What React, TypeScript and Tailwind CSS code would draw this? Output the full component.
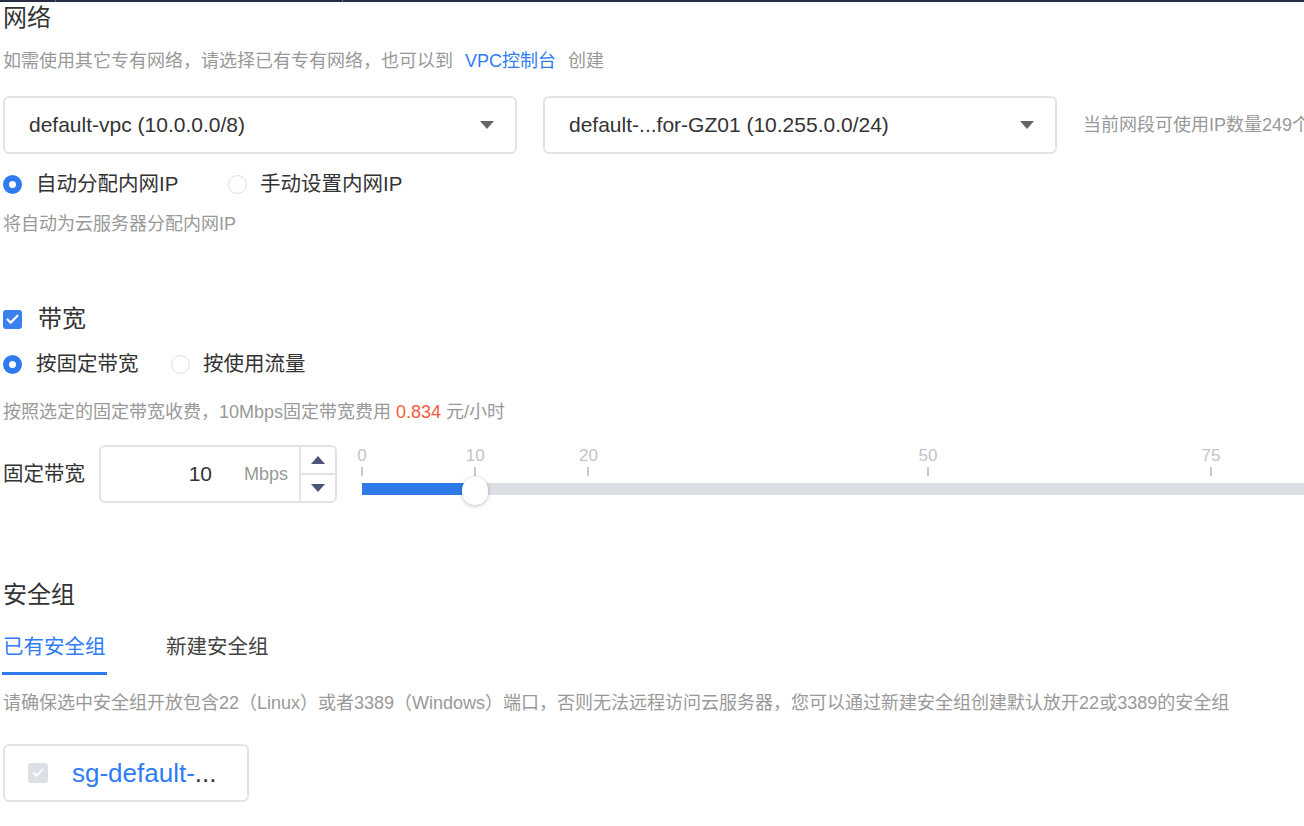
import { Check } from 'lucide-react'

const font = 'font-["Liberation_Sans","Noto_Sans_CJK_SC",sans-serif]'

const ticks = [
  { v: 0, label: '0' },
  { v: 10, label: '10' },
  { v: 20, label: '20' },
  { v: 50, label: '50' },
  { v: 75, label: '75' },
]

const UNIT = 11.32

function Radio({ checked }: { checked?: boolean }) {
  return checked ? (
    <span className="block w-[19px] h-[19px] rounded-full border-[6px] border-[#2f7bed] bg-white shrink-0" />
  ) : (
    <span className="block w-[19px] h-[19px] rounded-full border-[1.5px] border-[#dcdfe6] bg-white shrink-0" />
  )
}

function Caret() {
  return (
    <svg width="14" height="8" viewBox="0 0 14 8" className="shrink-0">
      <path d="M0 0h14L7 8z" fill="#666" />
    </svg>
  )
}

function Select({ text }: { text: string }) {
  return (
    <div className="w-[514px] h-[58px] shrink-0 flex items-center justify-between pl-[24px] pr-[21px] border-2 border-[#e0e3e8] rounded-[6px] text-[21px] text-[#333]">
      <span>{text}</span>
      <Caret />
    </div>
  )
}

function Slider({ value }: { value: number }) {
  const fill = value * UNIT
  return (
    <div className="relative w-[1132px] h-[58px] shrink-0">
      {ticks.map((t) => (
        <div key={t.v}>
          <span
            className="absolute top-0 h-[22px] leading-[22px] text-[17px] text-[#c0c4cc] -translate-x-1/2"
            style={{ left: t.v * UNIT }}
          >
            {t.label}
          </span>
          <span
            className="absolute top-[22px] w-[2px] h-[9px] bg-[#c6c8cc] -translate-x-1/2"
            style={{ left: t.v * UNIT }}
          />
        </div>
      ))}
      <div className="absolute left-0 right-0 top-[38px] h-[12px] bg-[#dcdfe4]" />
      <div className="absolute left-0 top-[38px] h-[12px] bg-[#2f7ae9]" style={{ width: fill }} />
      <div
        className="absolute top-[32px] w-[26px] h-[28px] rounded-full bg-white shadow-[0_1px_4px_rgba(0,0,0,0.25)] -translate-x-1/2"
        style={{ left: fill }}
      />
    </div>
  )
}

export default function App() {
  return (
    <div className={`w-[1304px] h-[826px] overflow-hidden bg-white ${font}`}>
      <div className="relative h-[2px] bg-[#272b45] shadow-[0_2px_6px_rgba(0,0,0,0.04)]">
        <span className="absolute left-[55px] top-0 w-[1px] h-[2px] bg-[#6b6f85]" />
        <span className="absolute left-[342px] top-0 w-[1px] h-[2px] bg-[#6b6f85]" />
      </div>

      <div className="pl-[3px] whitespace-nowrap">
        {/* 网络 */}
        <div className="h-[32px] flex items-center text-[24px] text-[#333]">网络</div>
        <div className="mt-[16px] h-[22px] flex items-center text-[18px] text-[#999]">
          如需使用其它专有网络，请选择已有专有网络，也可以到
          <span className="ml-[12px] text-[#2e7cf6]">VPC控制台</span>
          <span className="ml-[12px]">创建</span>
        </div>

        <div className="mt-[24px] flex items-center gap-[26px]">
          <Select text="default-vpc (10.0.0.0/8)" />
          <Select text="default-...for-GZ01 (10.255.0.0/24)" />
          <span className="shrink-0 text-[18px] text-[#999]">当前网段可使用IP数量249个</span>
        </div>

        <div className="mt-[16px] h-[28px] flex items-center text-[20.5px] text-[#333]">
          <div className="w-[225px] shrink-0 flex items-center gap-[14px]">
            <Radio checked />
            <span>自动分配内网IP</span>
          </div>
          <div className="flex items-center gap-[13px]">
            <Radio />
            <span>手动设置内网IP</span>
          </div>
        </div>
        <div className="mt-[15px] h-[22px] flex items-center text-[18px] text-[#999]">将自动为云服务器分配内网IP</div>

        {/* 带宽 */}
        <div className="mt-[70px] h-[28px] flex items-center gap-[16px]">
          <span className="w-[19px] h-[19px] shrink-0 rounded-[3px] bg-[#3b80ee] flex items-center justify-center">
            <Check size={15} strokeWidth={3.5} color="white" />
          </span>
          <span className="text-[24px] text-[#333]">带宽</span>
        </div>
        <div className="mt-[17px] h-[28px] flex items-center text-[20.5px] text-[#333]">
          <div className="w-[168px] shrink-0 flex items-center gap-[14px]">
            <Radio checked />
            <span>按固定带宽</span>
          </div>
          <div className="flex items-center gap-[13px]">
            <Radio />
            <span>按使用流量</span>
          </div>
        </div>
        <div className="mt-[23px] h-[22px] flex items-center text-[18px] text-[#999]">
          按照选定的固定带宽收费，10Mbps固定带宽费用
          <span className="ml-[5px] text-[#f65a3a]">0.834</span>
          <span className="ml-[5px]">元/小时</span>
        </div>

        <div className="mt-[22px] h-[58px] flex items-center">
          <span className="w-[96px] shrink-0 text-[20.5px] text-[#333]">固定带宽</span>
          <div className="w-[238px] h-[58px] shrink-0 flex border-2 border-[#e0e3e8] rounded-[6px]">
            <div className="flex-1 flex items-center justify-end pr-[11px]">
              <span className="text-[21px] text-[#333]">10</span>
              <span className="ml-[32px] text-[18px] text-[#999]">Mbps</span>
            </div>
            <div className="w-[36px] flex flex-col border-l-2 border-[#e0e3e8]">
              <div className="flex-1 flex items-center justify-center border-b-2 border-[#e0e3e8]">
                <svg width="14" height="8" viewBox="0 0 14 8">
                  <path d="M7 0l7 8H0z" fill="#4a5674" />
                </svg>
              </div>
              <div className="flex-1 flex items-center justify-center">
                <svg width="14" height="8" viewBox="0 0 14 8">
                  <path d="M0 0h14L7 8z" fill="#4a5674" />
                </svg>
              </div>
            </div>
          </div>
          <div className="ml-[25px] shrink-0">
            <Slider value={10} />
          </div>
        </div>

        {/* 安全组 */}
        <div className="mt-[78px] h-[28px] flex items-center text-[24px] text-[#333]">安全组</div>
        <div className="mt-[21px] flex text-[20.5px]">
          <div className="-ml-[1px] w-[105px] h-[45px] pt-[4px] pl-[1px] border-b-[3px] border-[#2f7bed] text-[#2e7cf6] leading-[26px]">
            已有安全组
          </div>
          <div className="ml-[59px] h-[45px] pt-[4px] text-[#444] leading-[26px]">新建安全组</div>
        </div>
        <div className="mt-[17px] h-[22px] flex items-center text-[18px] text-[#999]">
          请确保选中安全组开放包含22（Linux）或者3389（Windows）端口，否则无法远程访问云服务器，您可以通过新建安全组创建默认放开22或3389的安全组
        </div>

        <div className="mt-[30px] w-[246px] h-[58px] flex items-center pl-[23px] border-2 border-[#e0e3e8] rounded-[6px]">
          <span className="w-[20px] h-[20px] shrink-0 rounded-[3px] bg-[#dcdfe6] flex items-center justify-center">
            <Check size={14} strokeWidth={3} color="white" />
          </span>
          <span className="ml-[24px] text-[26px] text-[#2e7cf6]">
            sg-default-<span className="text-[#333]">...</span>
          </span>
        </div>
      </div>
    </div>
  )
}
